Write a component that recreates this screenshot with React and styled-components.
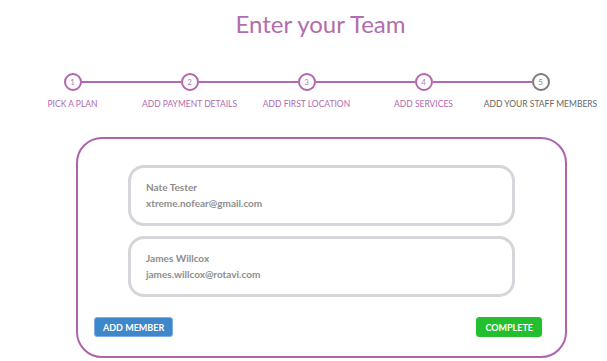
import React from 'react';
import styled, { createGlobalStyle } from 'styled-components';

const steps = [
	{ num: 1, label: 'Pick a plan', done: true },
	{ num: 2, label: 'Add payment details', done: true },
	{ num: 3, label: 'Add first location', done: true },
	{ num: 4, label: 'Add services', done: true },
	{ num: 5, label: 'Add your staff members', done: false },
];

const members = [
	{ name: 'Nate Tester', email: 'xtreme.nofear@gmail.com' },
	{ name: 'James Willcox', email: 'james.willcox@rotavi.com' },
];

const GlobalStyle = createGlobalStyle`
	body {
		margin: 0;
		background: #fff;
		font-family: Lato, 'Open Sans', sans-serif;
	}
`;

const App = () => {
	return (
		<>
			<GlobalStyle />
			<Page>
				<Title>Enter your Team</Title>
				<Stepper>
					{steps.map((step, index) => (
						<Step key={step.num}>
							<CircleRow>
								<Line $off={index === 0} />
								<Circle $done={step.done}>{step.num}</Circle>
								<Line $off={index === steps.length - 1} />
							</CircleRow>
							<StepLabel $done={step.done}>{step.label}</StepLabel>
						</Step>
					))}
				</Stepper>
				<Card>
					{members.map((m) => (
						<Member key={m.email}>
							<Name>{m.name}</Name>
							<Email>{m.email}</Email>
						</Member>
					))}
					<Actions>
						<Button $bg='#3e87ca' $edge='#7db0e0'>
							Add member
						</Button>
						<Button $bg='#22bf2e' $edge='#22bf2e'>
							Complete
						</Button>
					</Actions>
				</Card>
			</Page>
		</>
	);
};

const Page = styled.div`
	width: 607px;
	padding-top: 9px;
`;

const Title = styled.h1`
	margin: 0;
	padding-left: 34px;
	text-align: center;
	font-size: 24px;
	line-height: 30px;
	font-weight: 400;
	color: #b26dae;
`;

const Stepper = styled.div`
	display: grid;
	grid-template-columns: repeat(5, 117px);
	margin-top: 34px;
	padding-left: 14px;
`;

const Step = styled.div`
	display: flex;
	flex-direction: column;
	align-items: center;
`;

const CircleRow = styled.div`
	display: flex;
	align-items: center;
	width: 100%;
	height: 18px;
`;

const Line = styled.div`
	flex: 1;
	height: 2px;
	background: ${(p) => (p.$off ? 'transparent' : '#b568b1')};
`;

const Circle = styled.div`
	box-sizing: border-box;
	width: 18px;
	height: 18px;
	border-radius: 50%;
	border: 2px solid ${(p) => (p.$done ? '#b266ae' : '#7c7c7c')};
	display: flex;
	align-items: center;
	justify-content: center;
	font-size: 8px;
	font-weight: 400;
	color: ${(p) => (p.$done ? '#b77db3' : '#888')};
`;

const StepLabel = styled.div`
	margin-top: 8px;
	font-size: 8.5px;
	line-height: 11px;
	text-transform: uppercase;
	white-space: nowrap;
	color: ${(p) => (p.$done ? '#b06aac' : '#666')};
`;

const Card = styled.div`
	box-sizing: border-box;
	width: 491px;
	margin: 27px 0 0 76px;
	padding: 26px 23px 19px 16px;
	border: 2px solid #ad64ab;
	border-radius: 26px;
	display: flex;
	flex-direction: column;
`;

const Member = styled.div`
	box-sizing: border-box;
	width: 387px;
	align-self: center;
	margin: 0 0 10px 7px;
	padding: 11px 15px 12px;
	border: 3px solid #d5d5da;
	border-radius: 16px;
`;

const Name = styled.div`
	font-size: 10px;
	line-height: 16px;
	font-weight: 700;
	color: #8c8c8c;
`;

const Email = styled.div`
	font-size: 10px;
	line-height: 16px;
	font-weight: 700;
	color: #8e8e8e;
`;

const Actions = styled.div`
	display: flex;
	justify-content: space-between;
	margin-top: 10px;
`;

const Button = styled.button`
	height: 20px;
	padding: 0 8px;
	border: 1px solid ${(p) => p.$edge};
	border-radius: 3px;
	background: ${(p) => p.$bg};
	color: #fff;
	font-family: Lato, sans-serif;
	font-size: 9px;
	font-weight: 700;
	text-transform: uppercase;
`;

export default App;
